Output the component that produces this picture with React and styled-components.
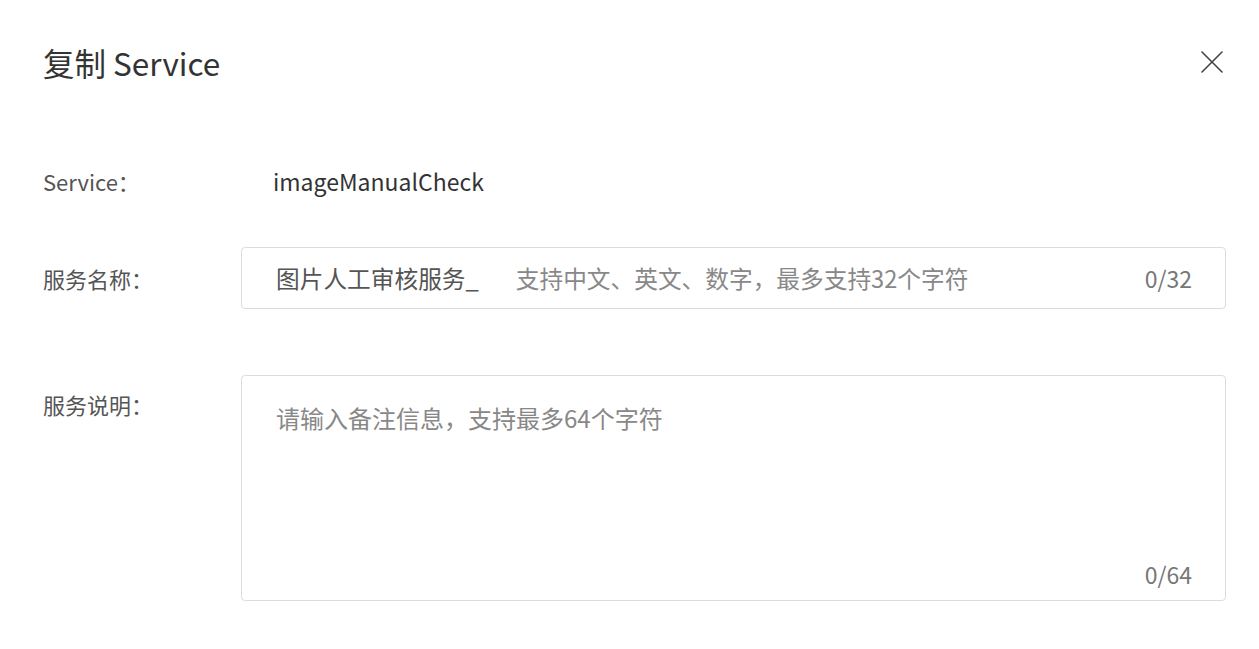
import React from "react";
import styled, { createGlobalStyle } from "styled-components";

const Global = createGlobalStyle`
  html, body { margin: 0; padding: 0; background: #fff; }
  body { font-family: "Noto Sans CJK SC", "Noto Sans", sans-serif; }
  * { box-sizing: border-box; }
`;

const Dialog = styled.div`
  width: 1259px;
  height: 649px;
  padding: 42px 33px 0 43px;
  display: flex;
  flex-direction: column;
  background: #fff;
`;

const Header = styled.div`
  display: flex;
  align-items: center;
  justify-content: space-between;
  height: 40px;
`;

const Title = styled.h1`
  margin: 0;
  font-size: 31.5px;
  font-weight: 400;
  line-height: 40px;
  color: #333;
`;

const CloseButton = styled.button`
  border: 0;
  background: none;
  padding: 0;
  margin-right: 1px;
  width: 26px;
  height: 26px;
  display: flex;
  align-items: center;
  justify-content: center;
  color: #444;
  cursor: pointer;
`;

const Form = styled.div`
  display: flex;
  flex-direction: column;
  margin-top: 83px;
`;

const Row = styled.div`
  display: grid;
  grid-template-columns: 198px 1fr;
  align-items: ${(p) => (p.$top ? "start" : "center")};
  margin-top: ${(p) => p.$gap || 0}px;
`;

const Label = styled.div`
  font-size: 22px;
  line-height: 32px;
  color: #555;
  padding-top: ${(p) => p.$offset || 0}px;
`;

const Value = styled.div`
  font-size: 23px;
  line-height: 32px;
  color: #333;
  padding-left: 32px;
`;

const Field = styled.div`
  height: 62px;
  border: 1px solid #dcdcdc;
  border-radius: 4px;
  display: flex;
  align-items: center;
  padding: 0 33px 0 34px;
  font-size: 23.7px;
`;

const Prefix = styled.span`
  color: #555;
  white-space: nowrap;
  margin-right: 37px;
`;

const TextInput = styled.input`
  flex: 1;
  border: 0;
  outline: none;
  padding: 0;
  font: inherit;
  color: #444;
  background: transparent;
  &::placeholder { color: #888; }
`;

const Counter = styled.span`
  font-size: 23px;
  color: #777;
  line-height: 32px;
`;

const AreaBox = styled.div`
  height: 226px;
  border: 1px solid #dcdcdc;
  border-radius: 4px;
  display: flex;
  flex-direction: column;
  padding: 26px 33px 10px 34px;
`;

const TextArea = styled.textarea`
  flex: 1;
  border: 0;
  outline: none;
  resize: none;
  padding: 0;
  font: inherit;
  font-size: 24px;
  line-height: 32px;
  color: #444;
  background: transparent;
  &::placeholder { color: #888; }
`;

const AreaCounter = styled(Counter)`
  align-self: flex-end;
`;

export default function App() {
  return (
    <>
      <Global />
      <Dialog>
        <Header>
          <Title>复制 Service</Title>
          <CloseButton aria-label="关闭">
            <svg width="22" height="22" viewBox="0 0 22 22" fill="none" stroke="currentColor" strokeWidth="1.6" strokeLinecap="round">
              <path d="M1 1 L21 21 M21 1 L1 21" />
            </svg>
          </CloseButton>
        </Header>
        <Form>
          <Row>
            <Label>Service：</Label>
            <Value>imageManualCheck</Value>
          </Row>
          <Row $gap={50}>
            <Label>服务名称：</Label>
            <Field>
              <Prefix>图片人工审核服务_</Prefix>
              <TextInput placeholder="支持中文、英文、数字，最多支持32个字符" />
              <Counter>0/32</Counter>
            </Field>
          </Row>
          <Row $gap={66} $top>
            <Label $offset={13}>服务说明：</Label>
            <AreaBox>
              <TextArea placeholder="请输入备注信息，支持最多64个字符" />
              <AreaCounter>0/64</AreaCounter>
            </AreaBox>
          </Row>
        </Form>
      </Dialog>
    </>
  );
}
